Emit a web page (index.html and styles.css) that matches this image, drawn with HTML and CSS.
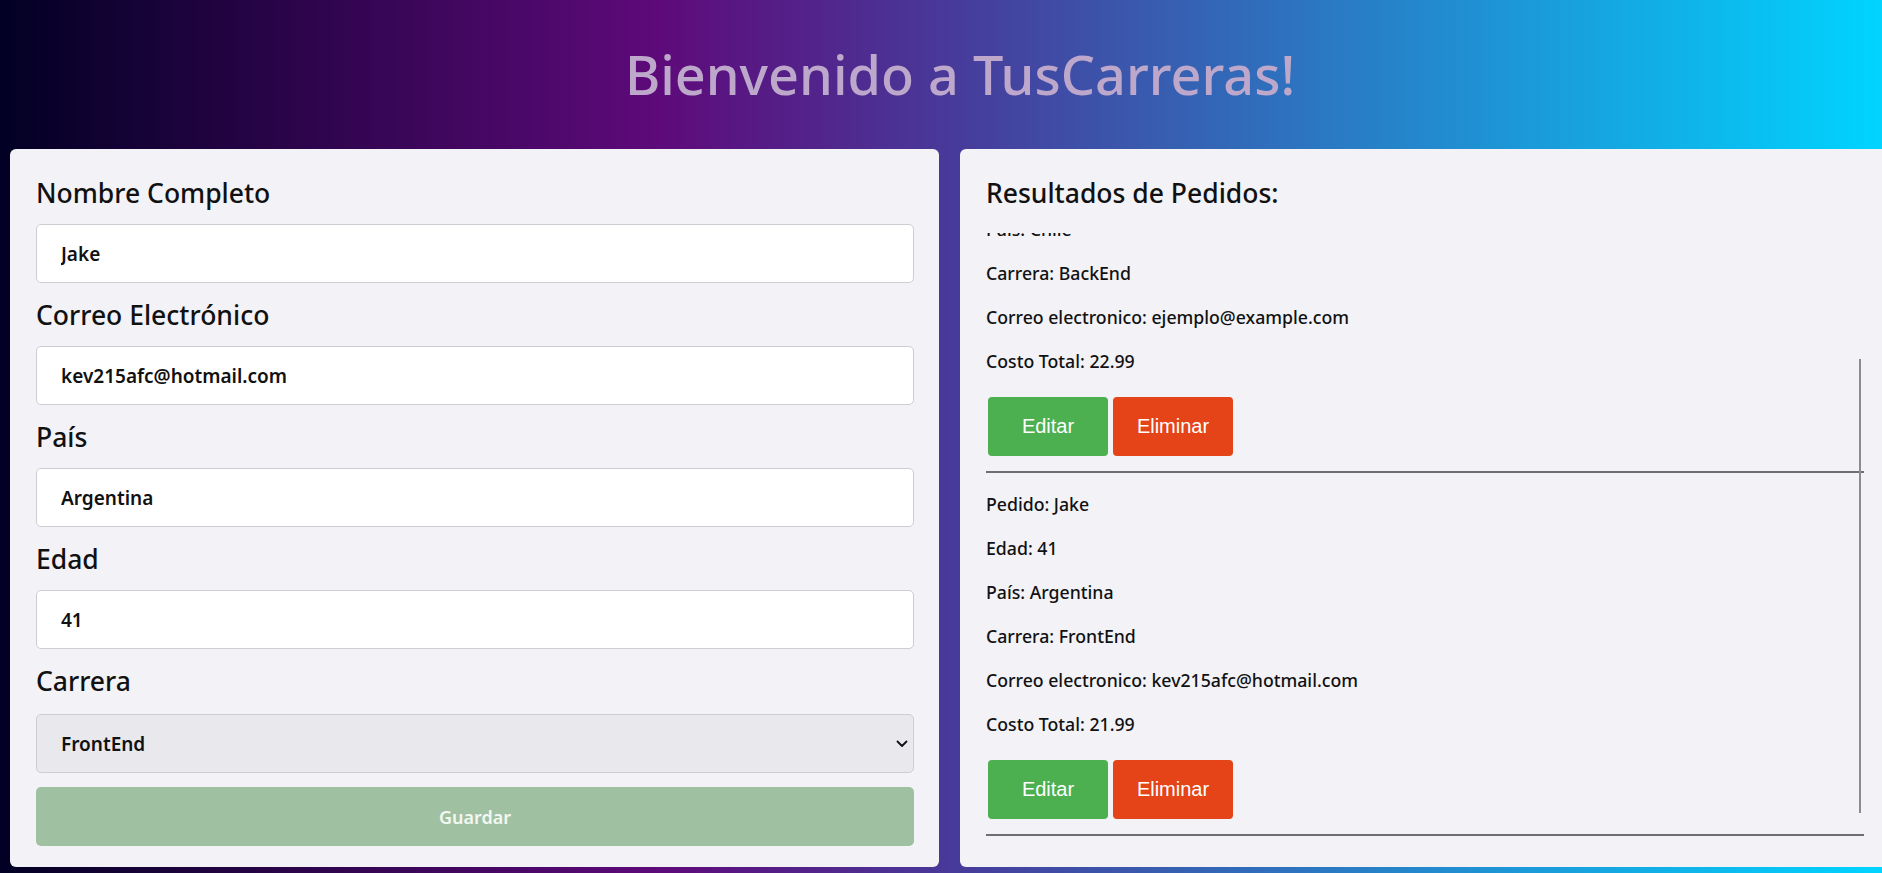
FILE: index.html
```html
<!DOCTYPE html>
<html lang="es">
<head>
<meta charset="utf-8">
<title>TusCarreras</title>
<link rel="stylesheet" href="styles.css">
</head>
<body>
<div class="page">
  <header class="hero">
    <h1 class="hero-title">Bienvenido a TusCarreras!</h1>
  </header>
  <main class="columns">
    <section class="card form-card">
      <form class="order-form">
        <label class="field-label" for="nombre">Nombre Completo</label>
        <input class="field-input" id="nombre" type="text" value="Jake">
        <label class="field-label" for="correo">Correo Electrónico</label>
        <input class="field-input" id="correo" type="text" value="kev215afc@hotmail.com">
        <label class="field-label" for="pais">País</label>
        <input class="field-input" id="pais" type="text" value="Argentina">
        <label class="field-label" for="edad">Edad</label>
        <input class="field-input" id="edad" type="text" value="41">
        <label class="field-label" for="carrera">Carrera</label>
        <div class="select-wrap">
          <select class="field-input field-select" id="carrera">
            <option>FrontEnd</option>
            <option>BackEnd</option>
          </select>
          <svg class="select-chevron" width="12" height="8" viewBox="0 0 12 8" aria-hidden="true"><path d="M1.5 1.5 L6 6 L10.5 1.5" fill="none" stroke="#111" stroke-width="1.8" stroke-linecap="round" stroke-linejoin="round"/></svg>
        </div>
        <button class="btn-save" type="button">Guardar</button>
      </form>
    </section>
    <section class="card results-card">
      <h2 class="results-title">Resultados de Pedidos:</h2>
      <div class="results-list">
        <div class="results-inner">
          <div class="order">
            <p>Pedido: Juan</p>
            <p>Edad: 25</p>
            <p>País: Chile</p>
            <p>Carrera: BackEnd</p>
            <p>Correo electronico: ejemplo@example.com</p>
            <p>Costo Total: 22.99</p>
            <div class="order-actions">
              <button class="btn btn-edit" type="button">Editar</button>
              <button class="btn btn-delete" type="button">Eliminar</button>
            </div>
            <hr class="order-divider">
          </div>
          <div class="order">
            <p>Pedido: Jake</p>
            <p>Edad: 41</p>
            <p>País: Argentina</p>
            <p>Carrera: FrontEnd</p>
            <p>Correo electronico: kev215afc@hotmail.com</p>
            <p>Costo Total: 21.99</p>
            <div class="order-actions">
              <button class="btn btn-edit" type="button">Editar</button>
              <button class="btn btn-delete" type="button">Eliminar</button>
            </div>
            <hr class="order-divider">
          </div>
        </div>
      </div>
      <div class="scroll-thumb"></div>
    </section>
  </main>
</div>
</body>
</html>
```

FILE: styles.css
```css
html, body {
  margin: 0;
  padding: 0;
}

body {
  overflow: hidden;
  font-family: "Noto Sans", "DejaVu Sans", sans-serif;
  color: #111;
  background: linear-gradient(90deg, #020024 0%, #5e0a7a 35%, #00d4ff 100%);
  min-height: 873px;
}

.page {
  width: 1920px;
}

.hero {
  height: 149px;
  display: flex;
  align-items: center;
  justify-content: center;
}

.hero-title {
  margin: 0;
  font-size: 54px;
  font-weight: 500;
  line-height: 1.2;
  color: #bda8cc;
}

.columns {
  display: grid;
  grid-template-columns: 929px 929px;
  column-gap: 21px;
  padding: 0 10px;
}

.card {
  background: #f2f2f7;
  border-radius: 6px;
  box-sizing: border-box;
}

.form-card {
  padding: 29px 25px 0 26px;
}

.order-form {
  display: flex;
  flex-direction: column;
}

.field-label {
  font-size: 26.5px;
  font-weight: 500;
  line-height: 31px;
  margin-bottom: 15px;
}

.field-input {
  box-sizing: border-box;
  width: 100%;
  height: 59px;
  margin: 0 0 17px;
  padding: 0 24px;
  border: 1px solid #cdcdd3;
  border-radius: 5px;
  background: #fff;
  font-family: "Noto Sans", "DejaVu Sans", sans-serif;
  font-size: 19px;
  font-weight: 600;
  color: #111;
  outline: none;
}

.select-wrap {
  position: relative;
  margin-top: 2px;
}

.field-select {
  appearance: none;
  -webkit-appearance: none;
  background: #e8e8ed;
  margin-bottom: 0;
}

.select-chevron {
  position: absolute;
  right: 6px;
  top: 26px;
}

.btn-save {
  margin-top: 14px;
  height: 59px;
  border: none;
  border-radius: 5px;
  background: #a0c1a1;
  color: #f3f7f3;
  font-family: "Noto Sans", "DejaVu Sans", sans-serif;
  font-size: 18px;
  font-weight: 600;
}

.results-card {
  position: relative;
  padding: 29px 25px 13px 26px;
}

.results-title {
  margin: 0;
  font-size: 26.5px;
  font-weight: 500;
  line-height: 31px;
}

.results-list {
  margin-top: 24px;
  height: 621px;
  overflow: hidden;
  display: flex;
  flex-direction: column;
  justify-content: flex-end;
}

.results-inner {
  flex-shrink: 0;
}

.order p {
  margin: 18px 0;
  font-size: 17.7px;
  font-weight: 500;
  line-height: 26px;
}

.order-actions {
  display: flex;
  gap: 5px;
  margin: 23px 0 0 2px;
}

.btn {
  width: 120px;
  height: 59px;
  border: none;
  border-radius: 4px;
  color: #fff;
  font-family: "Liberation Sans", Arial, sans-serif;
  font-size: 20px;
}

.btn-edit {
  background: #4caf50;
}

.btn-delete {
  background: #e44418;
}

.order-divider {
  margin: 15px 0 18px;
  border: 0;
  height: 2px;
  background: #6f6f6f;
}

.scroll-thumb {
  position: absolute;
  top: 210px;
  right: 28px;
  width: 2px;
  height: 454px;
  background: #8c8c8c;
}
```
